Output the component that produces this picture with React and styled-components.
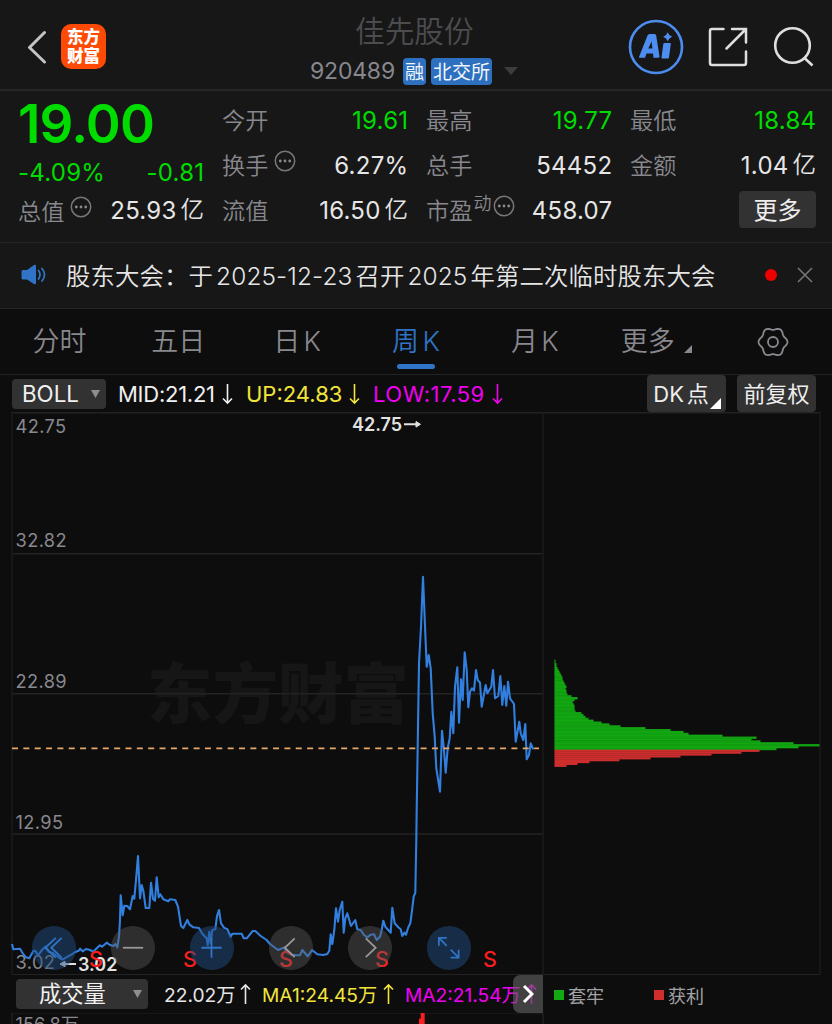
import React from 'react';
import styled, { createGlobalStyle } from 'styled-components';

const GlobalStyle = createGlobalStyle`
  * { box-sizing: border-box; }
  body {
    margin: 0;
    background: #0d0d0d;
  }
`;

const Page = styled.div`
  width: 832px;
  height: 1024px;
  overflow: hidden;
  background: #0d0d0d;
  color: #e6e6e6;
  font-family: Inter, "Noto Sans CJK SC", sans-serif;
  font-weight: 400;
  white-space: nowrap;
`;

const Header = styled.header`
  display: grid;
  grid-template-columns: 300px 1fr 222px;
  height: 91px;
  background: #171717;
  border-bottom: 2px solid #262626;
`;

const HeaderLeft = styled.div`
  display: flex;
  align-items: center;
  gap: 14px;
  padding: 4px 0 0 26px;
`;

const Logo = styled.div`
  display: flex;
  flex-direction: column;
  align-items: center;
  justify-content: center;
  width: 45px;
  height: 45px;
  border-radius: 10px;
  background: #ff4a05;
  color: #fff;
  font-size: 16.5px;
  font-weight: 900;
  line-height: 19px;
`;

const Title = styled.div`
  display: flex;
  flex-direction: column;
  padding: 13px 0 0 10px;
`;

const StockName = styled.h1`
  margin: 0 0 0 45px;
  color: #4c4c4e;
  font-size: 29.7px;
  font-weight: 350;
  line-height: 36px;
`;

const CodeLine = styled.div`
  display: flex;
  align-items: center;
  height: 28px;
  margin-top: 8px;
  color: #88888e;
  font-size: 23px;
  letter-spacing: -0.2px;
`;

const Tag = styled.span`
  display: flex;
  align-items: center;
  justify-content: center;
  width: ${(p) => p.$width}px;
  height: 27px;
  margin-left: ${(p) => p.$gap}px;
  padding-bottom: 2px;
  border-radius: 4px;
  background: #2d70c0;
  color: #f2f6fb;
  font-size: 19px;
  letter-spacing: 0;
`;

const HeaderRight = styled.div`
  display: flex;
  align-items: center;
  padding: 5px 0 0 18px;
`;

const Quotes = styled.section`
  display: grid;
  grid-template-columns: repeat(4, 186px);
  column-gap: 18px;
  height: 152px;
  padding: 7px 0 0 18px;
  background: #171717;
  border-bottom: 1px solid #242424;
`;

const Column = styled.div`
  display: flex;
  flex-direction: column;
`;

const Price = styled.div`
  height: 55px;
  color: #00dc00;
  font-size: 53px;
  font-weight: 600;
  line-height: 53px;
  letter-spacing: -0.8px;
`;

const Cell = styled.div`
  display: flex;
  align-items: center;
  justify-content: space-between;
  height: ${(p) => p.$height || 45}px;
  font-size: 24px;
`;

const Label = styled.span`
  display: flex;
  align-items: center;
  padding-bottom: 3px;
  color: #88888e;
  font-size: 23.2px;
  font-weight: 350;
`;

const Value = styled.span`
  color: ${(p) => (p.$down ? '#00dc00' : '#e6e6e6')};
  line-height: 36px;
  letter-spacing: 0.25px;
  margin-right: -0.3px;
  text-autospace: normal;
`;

// 亿 sits a little lower than the digits beside it
const Unit = styled.span`
  position: relative;
  top: -1px;
  margin-left: 1px;
  font-size: 23.5px;
  font-weight: 350;
`;

const Sup = styled.sup`
  align-self: flex-start;
  margin-left: 1px;
  font-size: 18px;
  line-height: 24px;
`;

const MoreButton = styled.button`
  width: 77px;
  height: 37px;
  margin: 3px 0 0 auto;
  padding: 0 0 3px;
  border: 0;
  border-radius: 4px;
  background: #323232;
  color: #eee;
  font: inherit;
  font-size: 24px;
`;

const Notice = styled.section`
  display: flex;
  align-items: center;
  height: 66px;
  padding: 0 0 2px 21px;
  background: #171717;
  border-bottom: 1px solid #242424;
`;

const NoticeText = styled.span`
  width: 699px;
  margin-left: 19px;
  font-size: 24.4px;
  font-weight: 350;
  letter-spacing: 0.12px;
  text-autospace: normal;
`;

const Dot = styled.i`
  width: 12px;
  height: 12px;
  margin-right: 20px;
  border-radius: 50%;
  background: #ec0000;
`;

const Tabs = styled.nav`
  display: grid;
  grid-template-columns: repeat(7, 1fr);
  height: 66px;
  border-bottom: 1px solid #222;
`;

const Tab = styled.div`
  display: flex;
  flex-direction: column;
  align-items: center;
  padding-top: 13px;
  color: ${(p) => (p.$active ? '#2f74c6' : '#88888e')};
  font-size: 27px;
  font-weight: 350;
  line-height: 40px;
  text-autospace: normal;

  &::after {
    content: '';
    width: 38px;
    height: 5px;
    margin-top: 2px;
    border-radius: 3px;
    background: ${(p) => (p.$active ? '#2f74c6' : 'transparent')};
  }
`;

const TabLabel = styled.span`
  display: flex;
  align-items: center;
  gap: 8px;
  height: 40px;
  padding-left: ${(p) => p.$shift || 0}px;
`;

const Toolbar = styled.div`
  display: flex;
  align-items: center;
  height: ${(p) => p.$height}px;
  padding-left: ${(p) => p.$left}px;
  font-size: ${(p) => p.$size}px;
`;

const Select = styled.div`
  display: flex;
  align-items: center;
  justify-content: space-between;
  width: ${(p) => p.$width}px;
  height: 30px;
  padding: 0 6px 0 ${(p) => p.$pad}px;
  border-radius: 4px;
  background: #323232;
  color: #f0f0f0;
  font-size: 22.3px;
  line-height: 28px;
`;

const Reading = styled.span`
  display: flex;
  align-items: center;
  justify-content: space-between;
  width: ${(p) => p.$width}px;
  margin-left: ${(p) => p.$gap}px;
  color: ${(p) => p.$color};
  letter-spacing: ${(p) => p.$spacing || 0}px;
`;

const ToolButton = styled.div`
  display: flex;
  align-items: center;
  justify-content: center;
  width: 79px;
  height: 37px;
  margin-left: ${(p) => p.$gap}px;
  padding-bottom: 3px;
  border-radius: 4px;
  background: #323232;
  color: #eee;
  font-size: 22px;
  text-autospace: normal;
`;

const Corner = styled.svg`
  align-self: flex-end;
  margin: 0 -1px ${(p) => p.$drop || 0}px 1px;
`;

const ChartArea = styled.div`
  position: relative;
  height: 563px;

  > svg {
    display: block;
  }
`;

const Controls = styled.div`
  position: absolute;
  left: 32px;
  top: 514px;
  display: flex;
  gap: 35.5px;
`;

const RoundButton = styled.div`
  width: 43.5px;
  height: 43.5px;
  border-radius: 50%;
  background: ${(p) => (p.$blue ? 'rgba(34, 78, 130, 0.5)' : 'rgba(92, 92, 94, 0.42)')};
  color: ${(p) => (p.$blue ? '#2f74c6' : '#98989a')};

  svg {
    display: block;
  }
`;

const Next = styled.div`
  display: flex;
  align-items: center;
  justify-content: center;
  width: 30px;
  height: 38px;
  margin-left: -24px;
  border-radius: 7px 0 0 7px;
  background: rgba(100, 100, 100, 0.6);
  z-index: 1;
`;

const Legend = styled.span`
  display: flex;
  align-items: center;
  gap: 4px;
  width: 100px;
  margin-left: ${(p) => p.$gap || 0}px;
  padding-top: 2px;
  color: #a2a2a5;
  font-size: 18px;

  &::before {
    content: '';
    width: 10px;
    height: 10px;
    background: ${(p) => p.$color};
  }
`;

const series = [
  [0, 840, '36,312 40,328 60,326 68,340 78,352 88,355 100,333 106,332 114,346 126,330 136,320 146,335 160,340 175,352 187,359 215,343 228,335 236,332 240,326 248,334 258,327 270,330 280,335 290,325 300,316 306,320 320,308 330,315 340,318 346,312 352,322 357,290 360,240 362,166 368,226 373,197 382,198 390,208 398,168 403,176 409,110 414,48 420,175 425,135 430,152 437,204 448,204 453,128 459,177 465,182 470,112 476,172 481,163 490,178 505,184 510,178 526,180 534,200 543,258 550,264 562,240 568,253 580,262 597,264 606,280 615,290 620,295 623,316 628,275 632,310 637,270 646,268 651,228 657,210 663,250 672,263 682,268 692,290 697,281 725,281 731,295 740,295 758,273 766,273 782,288 800,300'],
  [270, 840, '0,312 24,330 44,322 48,335 66,344 80,346 90,346 97,330 113,349 126,330 142,343 160,345 172,342 178,332 182,283 187,312 193,270 198,205 204,245 209,210 217,185 221,278 226,235 232,220 243,258 256,240 262,268 272,270 282,285 292,292 302,284 312,283 320,300 330,290 335,270 340,242 346,260 362,278 367,203 374,250 385,262 392,268 397,288 403,278 408,284 415,262 421,250 427,205 431,170 436,158 439,0'],
  [400, 560, '50,750 53,560 57,310 63,200 69,50 76,220 80,320 86,285 92,325 98,460 104,530 109,625 120,695 126,512 132,570 137,638 143,565 149,535 154,455 160,520 165,380 172,322 177,488 183,358 188,420 194,277 200,330 205,442 210,395 216,385 222,392 228,330 233,360 240,368 245,440 257,375 262,400 274,380 279,330 285,415 295,408 301,348 307,435 313,378 319,437 324,365 330,415 342,432 347,545 358,485 362,520 370,540 376,492 380,598 387,585 392,550 400,568'],
];

const linePoints = series
  .flatMap(([x0, y0, pts]) =>
    pts.split(' ').map((p) => {
      const [x, y] = p.split(',').map(Number);
      return `${(x0 + x / 3).toFixed(1)},${(y0 + y / 3).toFixed(1)}`;
    })
  )
  .join(' ');

const trapped = [
  1, 1, 2, 2, 3, 4, 5, 6, 7, 8, 8, 9, 10, 11, 12, 11, 12, 12, 13, 17, 23, 20, 18, 19, 20, 20, 20, 21,
  27, 29, 31, 34, 39, 47, 55, 66, 91, 116, 129, 134, 168, 202, 197, 206, 239, 265, 244, 222,
];
const profit = [205, 187, 157, 126, 96, 65, 35, 23, 12];
const BAR = 1.88;
const SPLIT = 749.7;

const axis = [
  ['42.75', 432.5],
  ['32.82', 546.5],
  ['22.89', 687.5],
  ['12.95', 828.5],
  ['3.02', 969],
];

// six-lobed outline for the settings gear
const gear = Array.from({ length: 90 }, (_, i) => {
  const a = (i * Math.PI) / 45;
  const r = 13.3 + 1.2 * Math.cos(6 * a);
  return `${(16 + r * Math.cos(a)).toFixed(2)},${(16 + r * Math.sin(a)).toFixed(2)}`;
}).join(' ');

const Info = ({ gap = 6 }) => (
  <svg width="22" height="22" viewBox="0 0 22 22" style={{ marginLeft: gap, marginTop: -6 }}>
    <circle cx="11" cy="11" r="9.7" fill="none" stroke="#77777b" strokeWidth="1.5" />
    <g fill="#88888e">
      <circle cx="6.3" cy="11" r="1.4" />
      <circle cx="11" cy="11" r="1.4" />
      <circle cx="15.7" cy="11" r="1.4" />
    </g>
  </svg>
);

const Arrow = ({ up }) => (
  <svg width="11" height="22" viewBox="0 0 11 22" fill="none" stroke="currentColor" strokeWidth="1.6">
    <path d={up ? 'M5.5 21V2M1 6.5L5.5 2L10 6.5' : 'M5.5 1V20M1 15.5L5.5 20L10 15.5'} />
  </svg>
);

const Caret = () => (
  <svg width="9" height="8" viewBox="0 0 10 10" preserveAspectRatio="none">
    <path d="M0 0H10L5 10Z" fill="#8e8e92" />
  </svg>
);

const Chart = () => (
  <svg width="832" height="563" viewBox="0 412 832 563">
    <text x="147" y="718" fontSize="65.5" fontWeight="900" fill="#161616">东方财富</text>
    <g stroke="#232323" strokeWidth="1.4" fill="none">
      <path d="M12 412.7H820M12 553.7H543M12 693.8H543M12 834H543M12 974.6H820" />
      <path d="M12 412V975M543 412V975M820 412V975" stroke="#1d1d1d" />
    </g>
    <g fontSize="18.2" fill="#88888e" letterSpacing="0.4">
      {axis.map(([label, y]) => (
        <text key={label} x="15.5" y={y}>{label}</text>
      ))}
    </g>
    <polyline points={linePoints} fill="none" stroke="#317fdf" strokeWidth="2.1" strokeLinejoin="round" />
    <path d="M12 748.4H539" stroke="#e5a868" strokeWidth="1.8" strokeDasharray="6 5.35" />
    <g fontSize="18" fontWeight="600" fill="#e2e2e2">
      <text x="352" y="431">42.75</text>
      <text x="78" y="970.5">3.02</text>
      <g stroke="#e2e2e2" strokeWidth="2">
        <path d="M404 424.3H416M76 964H65" />
        <path d="M416 421.5L420.5 424.3L416 427.1ZM65 961.2L60 964L65 966.8Z" strokeWidth="1" />
      </g>
    </g>
    {trapped.map((w, i) => (
      <rect key={i} x="554.5" y={SPLIT - (trapped.length - i) * BAR} width={w} height={BAR + 0.5} fill={i % 2 ? '#129f12' : '#12a812'} />
    ))}
    {profit.map((w, i) => (
      <rect key={i} x="554.5" y={SPLIT + i * BAR} width={w} height={BAR + 0.3} fill={i % 2 ? '#ca2e2e' : '#d02d2d'} />
    ))}
    <g fontSize="21.5" fontWeight="500" fill="#fa1e1e" textAnchor="middle">
      {[96, 190, 286, 382, 490].map((x) => (
        <text key={x} x={x} y="966.8">S</text>
      ))}
    </g>
  </svg>
);

const icons = [
  [true, 'M30 12L19.5 22L30 32M24 12L13.5 22L24 32'],
  [false, 'M12 22H32.5'],
  [true, 'M11.5 22H32M21.75 12V32'],
  [false, 'M26 12.5L16 22L26 31.5'],
  [false, 'M18 12.5L28 22L18 31.5'],
  [true, 'M12 20V12H20M12.5 12.5L20 20M32 24V32H24M31.5 31.5L24 24'],
];

const App = () => (
  <Page>
    <GlobalStyle />
    <Header>
      <HeaderLeft>
        <svg width="21" height="34" viewBox="0 0 21 34" fill="none" stroke="#c4c4c4" strokeWidth="3" strokeLinecap="round" strokeLinejoin="round">
          <path d="M18.5 2.5L3.5 17.5L18.5 32" />
        </svg>
        <Logo>
          <span>东方</span>
          <span>财富</span>
        </Logo>
      </HeaderLeft>
      <Title>
        <StockName>佳先股份</StockName>
        <CodeLine>
          920489
          <Tag $width={23} $gap={8}>融</Tag>
          <Tag $width={61} $gap={5}>北交所</Tag>
          <svg width="14" height="8" viewBox="0 0 14 8" style={{ marginLeft: 12 }}>
            <path d="M0 0H14L7 8Z" fill="#3c3c3e" />
          </svg>
        </CodeLine>
      </Title>
      <HeaderRight>
        <svg width="56" height="56" viewBox="0 0 56 56" fill="#4d8df2">
          <circle cx="28" cy="28" r="26" fill="none" stroke="#4d8df2" strokeWidth="2.6" />
          <path fillRule="evenodd" d="M11 38L19.5 16.5Q20 15 21.5 15H26.5Q28 15 28.2 16.5L31.5 37.5Q31.5 38.8 30 38.8H25.5L25 34.5H18.5L17 38.8H12Q10.5 38.8 11 38ZM20.3 29.5H24.4L23.6 22.5Z" />
          <path d="M36.5 24H42Q43 24 42.8 25L41 38.5Q40.8 39.5 39.8 39.5H34.3Q33.3 39.5 33.5 38.5L35.3 25Q35.5 24 36.5 24Z" />
          <path d="M39.7 13.2Q40.8 16.6 44.2 17.7Q40.8 18.8 39.7 22.2Q38.6 18.8 35.2 17.7Q38.6 16.6 39.7 13.2Z" />
        </svg>
        <svg width="40" height="40" viewBox="0 0 40 40" fill="none" stroke="#dedede" strokeWidth="2.5" style={{ marginLeft: 24 }}>
          <path d="M15.5 2H4Q2 2 2 4V36Q2 38 4 38H36Q38 38 38 36V24.5M24 2H38V15.5M38 2L18.5 21.5" strokeLinecap="round" />
        </svg>
        <svg width="42" height="42" viewBox="0 0 42 42" fill="none" stroke="#dedede" strokeWidth="2.6" style={{ marginLeft: 25 }}>
          <circle cx="19.5" cy="19.5" r="17.3" />
          <path d="M31.5 32L39.5 39.5" />
        </svg>
      </HeaderRight>
    </Header>

    <Quotes>
      <Column>
        <Price>19.00</Price>
        <Cell $height={40}>
          <Value $down>-4.09%</Value>
          <Value $down>-0.81</Value>
        </Cell>
        <Cell $height={36}>
          <Label>总值<Info /></Label>
          <Value>25.93<Unit>亿</Unit></Value>
        </Cell>
      </Column>
      <Column>
        <Cell><Label>今开</Label><Value $down>19.61</Value></Cell>
        <Cell><Label>换手<Info /></Label><Value>6.27%</Value></Cell>
        <Cell><Label>流值</Label><Value>16.50<Unit>亿</Unit></Value></Cell>
      </Column>
      <Column>
        <Cell><Label>最高</Label><Value $down>19.77</Value></Cell>
        <Cell><Label>总手</Label><Value>54452</Value></Cell>
        <Cell><Label>市盈<Sup>动</Sup><Info gap={2} /></Label><Value>458.07</Value></Cell>
      </Column>
      <Column>
        <Cell><Label>最低</Label><Value $down>18.84</Value></Cell>
        <Cell><Label>金额</Label><Value>1.04<Unit>亿</Unit></Value></Cell>
        <MoreButton>更多</MoreButton>
      </Column>
    </Quotes>

    <Notice>
      <svg width="26" height="22" viewBox="0 0 26 22">
        <path d="M2 6H6L13 1Q15 0 15 2V19Q15 21 13 20L6 15.5H2Q0.5 15.5 0.5 14V7.5Q0.5 6 2 6Z" fill="#2f74c6" />
        <path d="M17.5 6.5Q20.5 10.5 17.5 15M21 4.5Q26 10.5 21 17" fill="none" stroke="#2f74c6" strokeWidth="1.8" strokeLinecap="round" />
      </svg>
      <NoticeText>股东大会：于2025-12-23召开2025年第二次临时股东大会</NoticeText>
      <Dot />
      <svg width="16" height="16" viewBox="0 0 16 16" stroke="#77777a" strokeWidth="1.5">
        <path d="M1 1L15 15M15 1L1 15" />
      </svg>
    </Notice>

    <Tabs>
      <Tab><TabLabel>分时</TabLabel></Tab>
      <Tab><TabLabel>五日</TabLabel></Tab>
      <Tab><TabLabel>日K</TabLabel></Tab>
      <Tab $active><TabLabel>周K</TabLabel></Tab>
      <Tab><TabLabel>月K</TabLabel></Tab>
      <Tab>
        <TabLabel $shift={4}>
          更多
          <Corner $drop={9} width="8" height="8" viewBox="0 0 8 8"><path d="M8 0V8H0Z" fill="#88888e" /></Corner>
        </TabLabel>
      </Tab>
      <Tab>
        <TabLabel>
          <svg width="32" height="32" viewBox="0 0 32 32" fill="none" stroke="#88888e" strokeWidth="1.8" strokeLinejoin="round">
            <polygon points={gear} />
            <circle cx="16" cy="16" r="5" />
          </svg>
        </TabLabel>
      </Tab>
    </Tabs>

    <Toolbar $height={37} $left={12} $size={22}>
      <Select $width={94} $pad={10}>BOLL<Caret /></Select>
      <Reading $width={115} $gap={12} $color="#f0f0f0" $spacing={-0.25}>MID:21.21<Arrow /></Reading>
      <Reading $width={114} $gap={13} $color="#f2e43c">UP:24.83<Arrow /></Reading>
      <Reading $width={130} $gap={13} $color="#f000f0" $spacing={0.5}>LOW:17.59<Arrow /></Reading>
      <ToolButton $gap={144}>
        DK点
        <Corner width="11" height="11" viewBox="0 0 11 11"><path d="M11 0V11H0Z" fill="#fff" /></Corner>
      </ToolButton>
      <ToolButton $gap={11}>前复权</ToolButton>
    </Toolbar>

    <ChartArea>
      <Chart />
      <Controls>
        {icons.map(([blue, d], i) => (
          <RoundButton key={i} $blue={blue}>
            <svg width="43.5" height="43.5" viewBox="0 0 44 44" fill="none" stroke="currentColor" strokeWidth="1.8">
              <path d={d} />
            </svg>
          </RoundButton>
        ))}
      </Controls>
    </ChartArea>

    <Toolbar $height={38} $left={16} $size={19.2}>
      <Select $width={132} $pad={23}>成交量<Caret /></Select>
      <Reading $width={87} $gap={16} $color="#e6e6e6">22.02万<Arrow up /></Reading>
      <Reading $width={132} $gap={11} $color="#f2e43c">MA1:24.45万<Arrow up /></Reading>
      <Reading $width={132} $gap={11} $color="#f000f0">MA2:21.54万<Arrow up /></Reading>
      <Next>
        <svg width="12" height="20" viewBox="0 0 12 20" fill="none" stroke="#fff" strokeWidth="3">
          <path d="M2 2L10 10L2 18" />
        </svg>
      </Next>
      <Legend $color="#12a912" $gap={11}>套牢</Legend>
      <Legend $color="#d02d2d">获利</Legend>
    </Toolbar>

    <svg width="832" height="11" viewBox="0 1013 832 11" style={{ display: 'block' }}>
      <path d="M12 1012.7H543M12 1013V1024M543 1013V1024" stroke="#232323" strokeWidth="1.4" />
      <text x="15.5" y="1030.5" fontSize="18.2" fill="#88888e">156.8万</text>
      <path d="M419 1024V1018.5H420.7V1013H424.7V1024Z" fill="#fa1e1e" />
    </svg>
  </Page>
);

export default App;
